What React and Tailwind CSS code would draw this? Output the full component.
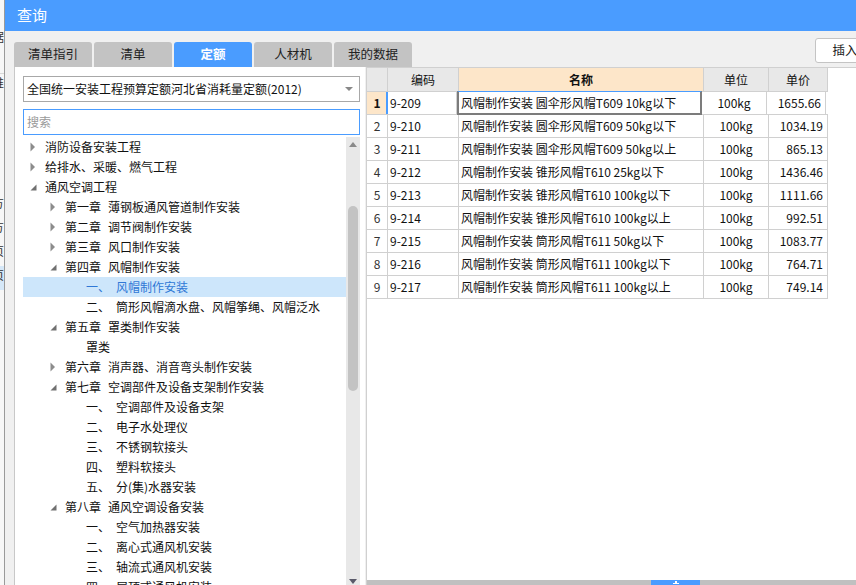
import React from "react"

const FONT = { fontFamily: "'Noto Sans CJK SC', 'Liberation Sans', sans-serif" }

const tabs = ["清单指引", "清单", "定额", "人材机", "我的数据"]

const tree = [
  { lvl: 0, arrow: "r", text: "消防设备安装工程" },
  { lvl: 0, arrow: "r", text: "给排水、采暖、燃气工程" },
  { lvl: 0, arrow: "d", text: "通风空调工程" },
  { lvl: 1, arrow: "r", ch: "第一章", text: "薄钢板通风管道制作安装" },
  { lvl: 1, arrow: "r", ch: "第二章", text: "调节阀制作安装" },
  { lvl: 1, arrow: "r", ch: "第三章", text: "风口制作安装" },
  { lvl: 1, arrow: "d", ch: "第四章", text: "风帽制作安装" },
  { lvl: 2, num: "一、", text: "风帽制作安装", selected: true },
  { lvl: 2, num: "二、", text: "筒形风帽滴水盘、风帽筝绳、风帽泛水" },
  { lvl: 1, arrow: "d", ch: "第五章", text: "罩类制作安装" },
  { lvl: 2, text: "罩类" },
  { lvl: 1, arrow: "r", ch: "第六章", text: "消声器、消音弯头制作安装" },
  { lvl: 1, arrow: "d", ch: "第七章", text: "空调部件及设备支架制作安装" },
  { lvl: 2, num: "一、", text: "空调部件及设备支架" },
  { lvl: 2, num: "二、", text: "电子水处理仪" },
  { lvl: 2, num: "三、", text: "不锈钢软接头" },
  { lvl: 2, num: "四、", text: "塑料软接头" },
  { lvl: 2, num: "五、", text: "分(集)水器安装" },
  { lvl: 1, arrow: "d", ch: "第八章", text: "通风空调设备安装" },
  { lvl: 2, num: "一、", text: "空气加热器安装" },
  { lvl: 2, num: "二、", text: "离心式通风机安装" },
  { lvl: 2, num: "三、", text: "轴流式通风机安装" },
  { lvl: 2, num: "四、", text: "屋顶式通风机安装" },
]

const rows = [
  ["9-209", "风帽制作安装 圆伞形风帽T609 10kg以下", "1655.66"],
  ["9-210", "风帽制作安装 圆伞形风帽T609 50kg以下", "1034.19"],
  ["9-211", "风帽制作安装 圆伞形风帽T609 50kg以上", "865.13"],
  ["9-212", "风帽制作安装 锥形风帽T610 25kg以下", "1436.46"],
  ["9-213", "风帽制作安装 锥形风帽T610 100kg以下", "1111.66"],
  ["9-214", "风帽制作安装 锥形风帽T610 100kg以上", "992.51"],
  ["9-215", "风帽制作安装 筒形风帽T611 50kg以下", "1083.77"],
  ["9-216", "风帽制作安装 筒形风帽T611 100kg以下", "764.71"],
  ["9-217", "风帽制作安装 筒形风帽T611 100kg以上", "749.14"],
]

function Arrow({ dir }) {
  if (dir === "r") {
    return (
      <svg width="6" height="10" viewBox="0 0 6 10">
        <path d="M0.5 0.5 L5 5 L0.5 9.5 Z" fill="#8c8c8c" />
      </svg>
    )
  }
  return (
    <svg width="7" height="7" viewBox="0 0 7 7">
      <path d="M6.5 0.5 L6.5 6.5 L0.5 6.5 Z" fill="#707070" />
    </svg>
  )
}

function TreeRow({ item }) {
  return (
    <div
      className={`flex items-center h-[20px] shrink-0 whitespace-nowrap text-[12px] ${
        item.selected ? "bg-[#cde6fb] text-[#2f78d6]" : "text-[#111]"
      }`}
    >
      <div className={item.lvl === 0 ? "w-0" : item.lvl === 1 ? "w-[20px]" : "w-[41px]"} />
      <div className="w-[22px] flex items-center pl-[7px]">
        {item.arrow && <Arrow dir={item.arrow} />}
      </div>
      {item.lvl === 2 && item.num ? (
        <>
          <span className="w-[30px]">{item.num}</span>
          <span>{item.text}</span>
        </>
      ) : item.ch ? (
        <>
          <span className="mr-[7px]">{item.ch}</span>
          <span>{item.text}</span>
        </>
      ) : (
        <span>{item.text}</span>
      )}
    </div>
  )
}

function Tab({ label, active }) {
  return (
    <div
      className={`w-[78px] h-[25px] rounded-t-[3px] flex items-center justify-center text-[12.5px] ${
        active ? "bg-[#4a9cff] text-white font-bold" : "bg-[#c3c3c3] text-[#222]"
      }`}
    >
      {label}
    </div>
  )
}

export default function App() {
  return (
    <div className="w-[856px] h-[585px] flex overflow-hidden bg-[#f0f0f0]" style={FONT}>
      {/* background window sliver */}
      <div className="w-[5px] shrink-0 bg-[#f7f7f7] flex flex-col overflow-hidden text-[12px] text-[#333] border-r border-[#9a9a9a]">
        <div className="h-[28px]" />
        <div className="h-[16px] -ml-[8px] whitespace-nowrap">据</div>
        <div className="h-[30px] border-b border-[#d8d8d8]" />
        <div className="h-[16px] -ml-[8px] whitespace-nowrap">推</div>
        <div className="h-[104px]" />
        <div className="h-[24px] -ml-[8px] whitespace-nowrap">方</div>
        <div className="h-[24px] -ml-[8px] whitespace-nowrap">方</div>
        <div className="h-[24px] -ml-[8px] whitespace-nowrap">页</div>
        <div className="h-[24px] -ml-[8px] whitespace-nowrap bg-[#d6e8f8]">页</div>
      </div>

      {/* dialog */}
      <div className="flex-1 flex flex-col min-w-0">
        <div className="h-[31px] shrink-0 bg-[#4a9cff] text-white text-[15px] flex items-center pl-[12px]">
          查询
        </div>

        <div className="flex-1 flex flex-col pl-[9px] overflow-hidden">
          {/* tabs + insert */}
          <div className="h-[36px] shrink-0 flex items-end">
            <div className="flex gap-[2px]">
              {tabs.map((t) => (
                <Tab key={t} label={t} active={t === "定额"} />
              ))}
            </div>
            <div className="flex-1" />
            <div className="self-start mt-[7px] w-[60px] h-[25px] -mr-[19px] shrink-0 bg-white border border-[#c4c4c4] rounded-[3px] flex items-center justify-center text-[12.5px] text-[#222]">
              插入
            </div>
          </div>

          <div className="flex-1 flex gap-[1px] min-h-0">
            {/* left panel */}
            <div className="w-[351px] shrink-0 bg-white border-l border-[#c8c8c8] flex flex-col pl-[8px] pr-[5px] pt-[9px] min-h-0">
              <div className="h-[26px] shrink-0 border border-[#a8a8a8] flex items-center pl-[3px] pr-[6px] text-[12px] text-[#111] whitespace-nowrap">
                <span className="flex-1">全国统一安装工程预算定额河北省消耗量定额(2012)</span>
                <svg width="8" height="4" viewBox="0 0 8 4">
                  <path d="M0 0 L8 0 L4 4 Z" fill="#888" />
                </svg>
              </div>
              <div className="h-[26px] mt-[7px] shrink-0 border border-[#4a9cff] flex items-center pl-[3px] text-[12px] text-[#9a9a9a]">
                搜索
              </div>
              <div className="flex-1 flex mt-[2px] min-h-0">
                <div className="flex-1 flex flex-col overflow-hidden">
                  {tree.map((item, i) => (
                    <TreeRow key={i} item={item} />
                  ))}
                </div>
                {/* scrollbar */}
                <div className="w-[14px] shrink-0 bg-[#e8e8e8] flex flex-col items-center pt-[5px]">
                  <svg width="8" height="5" viewBox="0 0 8 5">
                    <path d="M0 5 L4 0 L8 5 Z" fill="#8a8a8a" />
                  </svg>
                  <div className="h-[59px]" />
                  <div className="w-[10px] h-[185px] rounded-[5px] bg-[#c3c3c3]" />
                  <div className="flex-1" />
                  <svg width="8" height="5" viewBox="0 0 8 5" className="mb-[1px]">
                    <path d="M0 0 L8 0 L4 5 Z" fill="#5a5a6a" />
                  </svg>
                </div>
              </div>
            </div>

            {/* right panel */}
            <div className="flex-1 flex flex-col bg-white border-l border-t border-[#d0d0d0] min-w-0">
              <div className="flex-1 min-h-0">
                <div className="w-[461px] text-[12px] text-[#111]">
                  <div className="flex h-[24px] bg-[#e8e8e8] border-b border-[#d0d0d0]">
                    <div className="w-[21px] border-r border-[#d0d0d0]" />
                    <div className="w-[71px] border-r border-[#d0d0d0] flex items-center justify-center">编码</div>
                    <div className="w-[245px] border-r border-[#d0d0d0] bg-[#fde6c9] flex items-center justify-center font-bold">
                      名称
                    </div>
                    <div className="w-[65px] border-r border-[#d0d0d0] flex items-center justify-center">单位</div>
                    <div className="w-[59px] border-r border-[#d0d0d0] flex items-center justify-center">单价</div>
                  </div>
                  {rows.map((r, i) => {
                    const first = i === 0
                    return (
                      <div key={r[0]} className="flex h-[23px] border-b border-[#d0d0d0]">
                        <div
                          className={`w-[21px] border-r border-[#d0d0d0] flex items-center justify-center ${
                            first ? "bg-[#fde6c9] font-bold" : "text-[#333]"
                          }`}
                        >
                          {i + 1}
                        </div>
                        <div
                          className={`w-[71px] border-r border-[#d0d0d0] flex items-center pl-[2px] ${
                            first ? "border-l-2 border-l-[#4a9cff] -ml-[2px]" : ""
                          }`}
                        >
                          {r[0]}
                        </div>
                        <div
                          className={`w-[245px] flex items-center pl-[2px] whitespace-nowrap ${
                            first
                              ? "border-2 border-[#7c7c7c] border-t-[#4a9cff] border-t-[1px] -mt-[1px] -mb-[1px] h-[24px]"
                              : "border-r border-[#d0d0d0]"
                          }`}
                        >
                          {r[1]}
                        </div>
                        <div className="w-[65px] border-r border-[#d0d0d0] flex items-center justify-center">100kg</div>
                        <div className="w-[59px] border-r border-[#d0d0d0] flex items-center justify-end pr-[4px]">
                          {r[2]}
                        </div>
                      </div>
                    )
                  })}
                </div>
              </div>
              {/* splitter */}
              <div className="h-[5px] shrink-0 bg-[#c0c0c0] flex">
                <div className="w-[284px]" />
                <div className="w-[49px] bg-[#4a9cff] flex items-end justify-center">
                  <svg width="6" height="4" viewBox="0 0 6 4">
                    <path d="M2 0 L4 0 L4 2 L6 2 L6 3 L0 3 L0 2 L2 2 Z" fill="#fff" />
                  </svg>
                </div>
              </div>
            </div>
          </div>
        </div>
      </div>
    </div>
  )
}
